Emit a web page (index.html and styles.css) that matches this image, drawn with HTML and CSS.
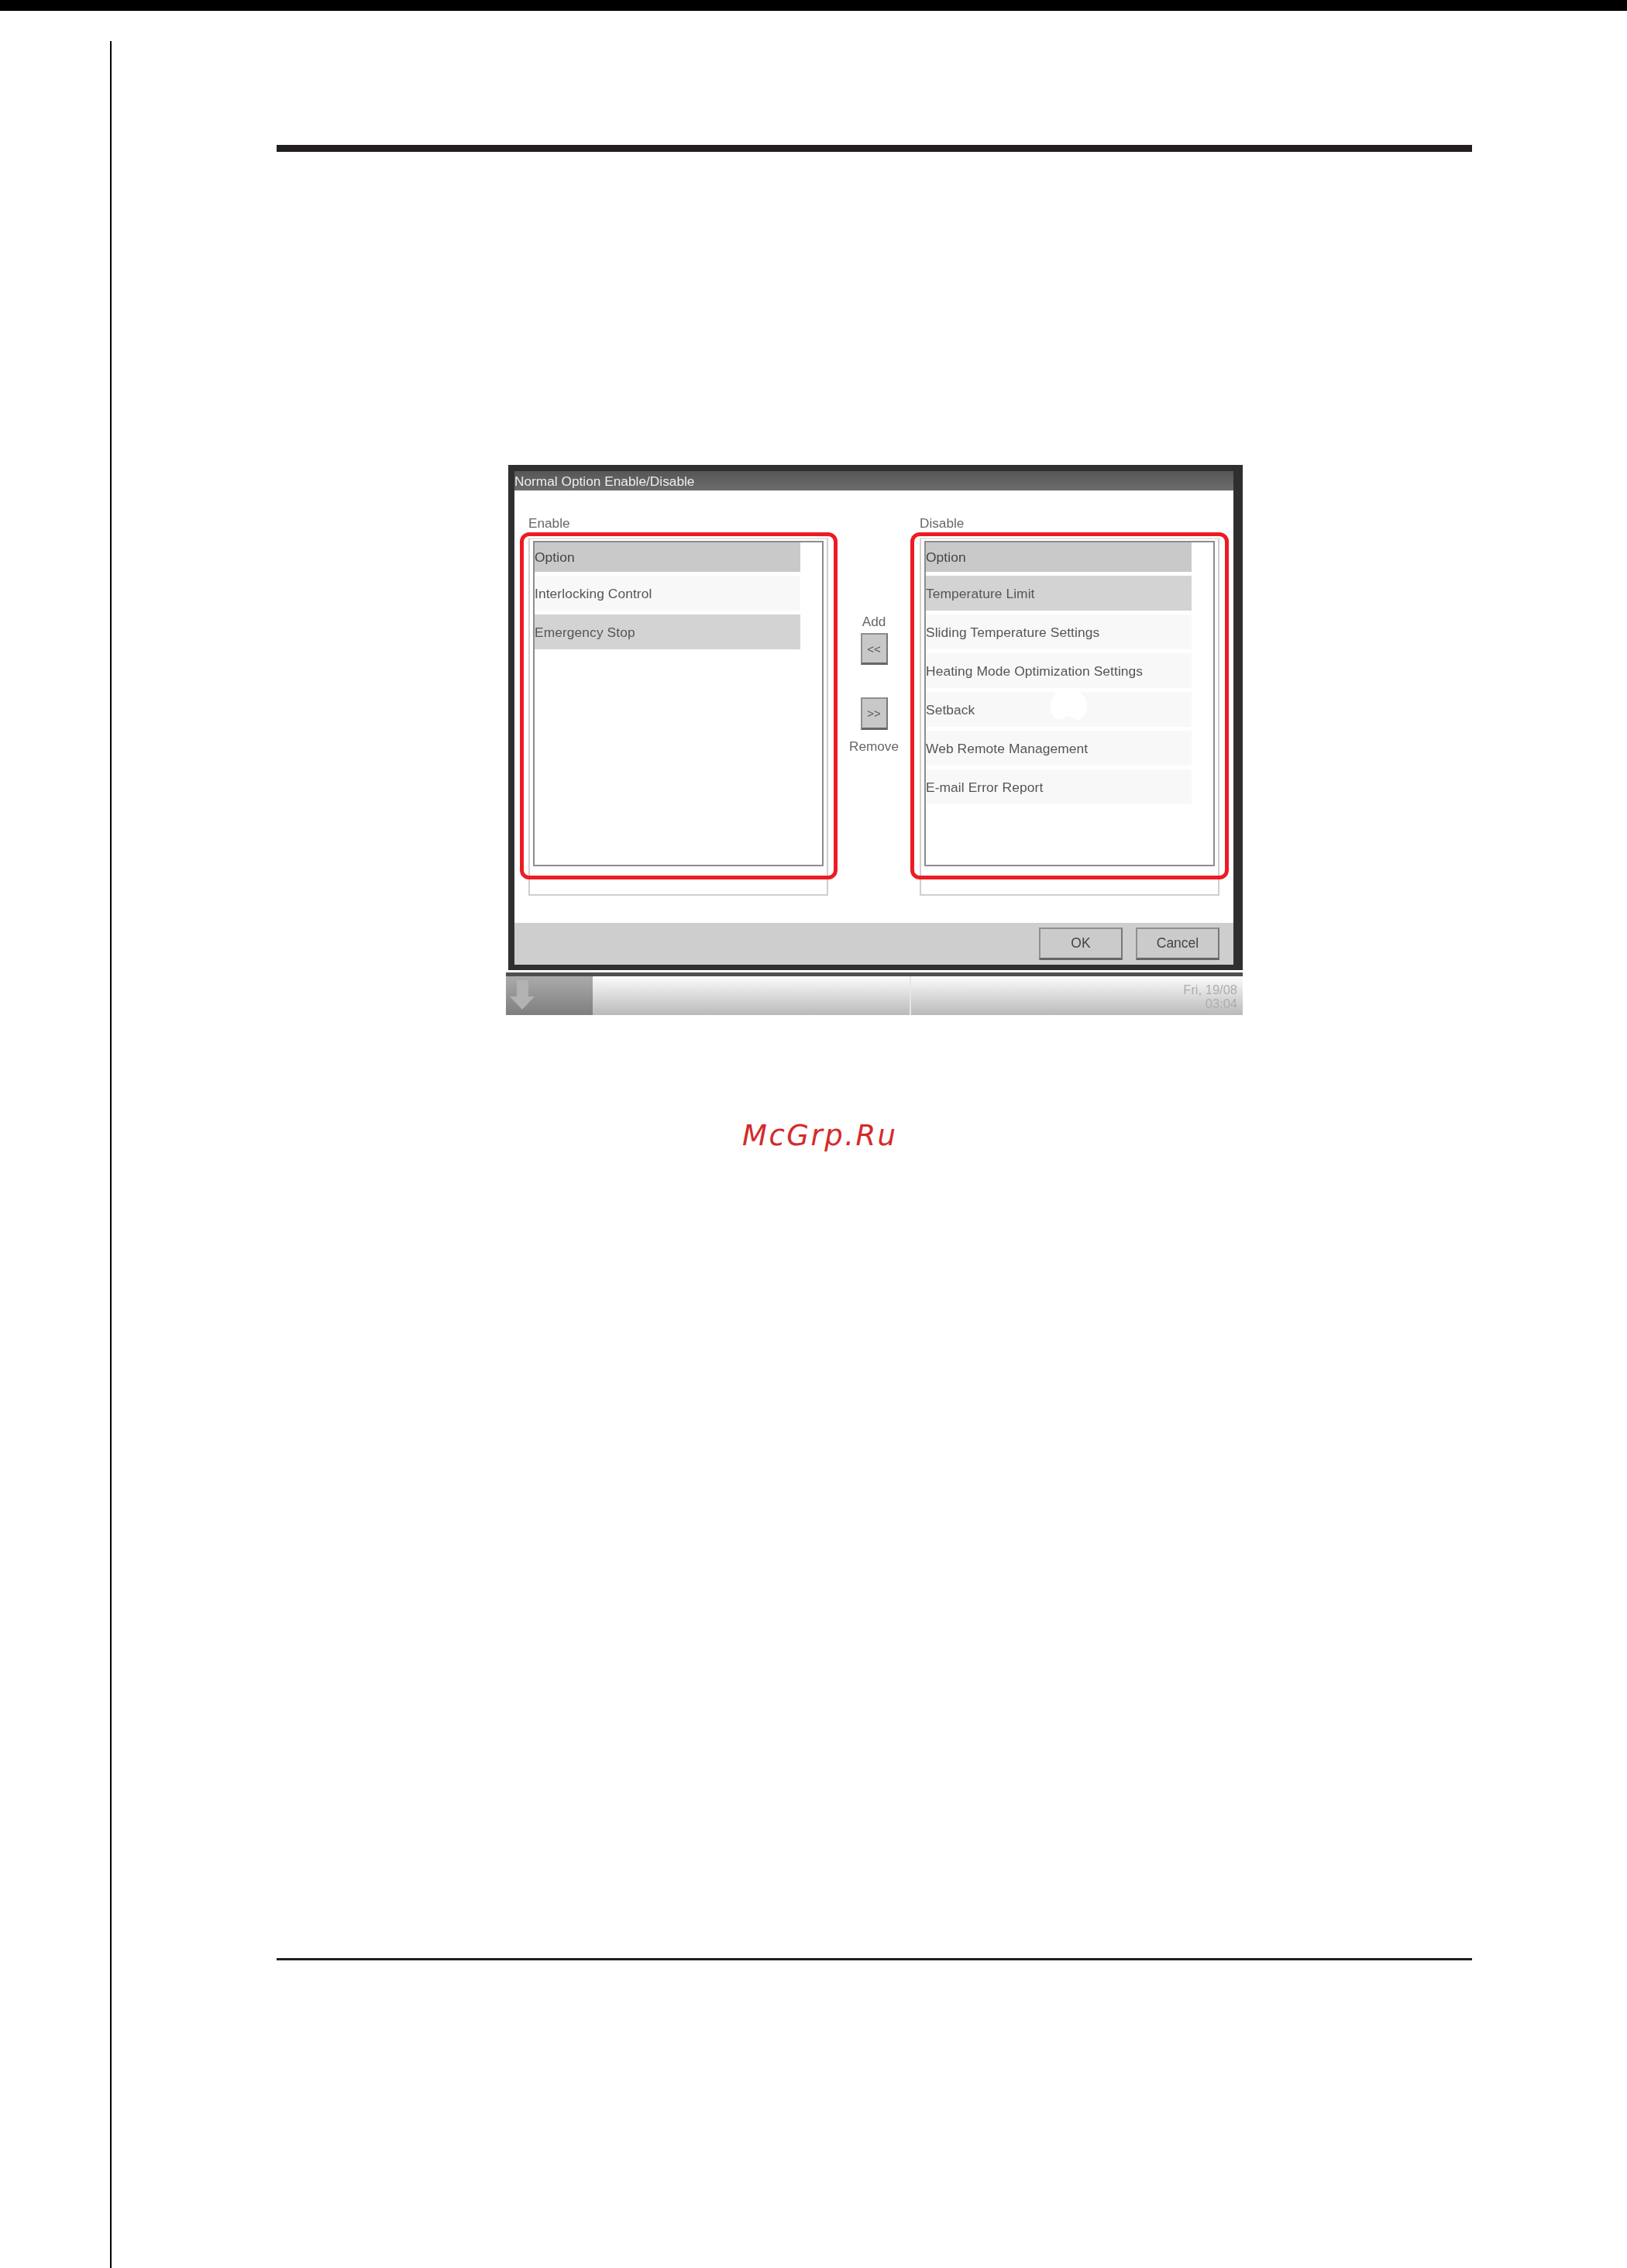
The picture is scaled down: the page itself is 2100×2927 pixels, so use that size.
FILE: index.html
```html
<!DOCTYPE html>
<html lang="en">
<head>
<meta charset="utf-8">
<title>Normal Option Enable/Disable</title>
<link rel="stylesheet" href="styles.css">
</head>
<body>
<div class="topbar"></div>
<main class="sheet">
  <div class="rule-heavy"></div>
  <section class="figure">
    <div class="dialog">
      <div class="titlebar">Normal Option Enable/Disable</div>
      <div class="content">
        <div class="col">
          <div class="col-label">Enable</div>
          <div class="outer">
            <div class="inner">
              <div class="rows">
                <div class="row row-head">Option</div>
                <div class="row">Interlocking Control</div>
                <div class="row row-sel">Emergency Stop</div>
              </div>
            </div>
            <div class="redbox"></div>
          </div>
        </div>
        <div class="center">
          <div class="center-label">Add</div>
          <div class="arrowbtn arrowbtn-add">&lt;&lt;</div>
          <div class="arrowbtn arrowbtn-remove">&gt;&gt;</div>
          <div class="center-label center-label-remove">Remove</div>
        </div>
        <div class="col">
          <div class="col-label">Disable</div>
          <div class="outer">
            <div class="inner">
              <div class="rows">
                <div class="row row-head">Option</div>
                <div class="row row-sel">Temperature Limit</div>
                <div class="row">Sliding Temperature Settings</div>
                <div class="row">Heating Mode Optimization Settings</div>
                <div class="row">Setback</div>
                <div class="row">Web Remote Management</div>
                <div class="row">E-mail Error Report</div>
                <svg class="blob" viewBox="0 0 47 41" width="47" height="41"><path d="M23.5 0C37 0 47 11 47 23C47 33 42 41 35 41C29 41 28 36 23.5 36C19 36 18 41 12 41C5 41 0 33 0 23C0 11 10 0 23.5 0Z"/></svg>
              </div>
            </div>
            <div class="redbox redbox-right"></div>
          </div>
        </div>
      </div>
      <div class="footer">
        <div class="btn">OK</div>
        <div class="btn">Cancel</div>
      </div>
    </div>
    <div class="strip"></div>
    <div class="taskbar">
      <div class="downbtn">
        <svg viewBox="0 0 32 38" width="32" height="38"><path d="M9 0H24V21H32L16 38L0 21H9Z"/></svg>
      </div>
      <div class="seg"></div>
      <div class="seg seg-date"><span>Fri, 19/08</span><span>03:04</span></div>
    </div>
  </section>
  <div class="watermark">McGrp.Ru</div>
  <div class="rule-thin"></div>
</main>
</body>
</html>
```

FILE: styles.css
```css
* { box-sizing: border-box; }
html, body { margin: 0; padding: 0; background: #fff; }
body { width: 2100px; height: 2927px; overflow: hidden; font-family: "Liberation Sans", Arial, sans-serif; }

.topbar { height: 14px; background: #000; }
.sheet { margin: 39px 0 0 142px; width: 1758px; height: 2874px; border-left: 2px solid #000; padding: 134px 0 0 213px; }
.rule-heavy { height: 9px; background: #231f20; }
.rule-thin { margin-top: 1039px; height: 3px; background: #231f20; }

.figure { margin: 404px 0 0 296px; width: 951px; filter: blur(0.7px); }
.dialog { margin-left: 3px; width: 948px; height: 652px; background: #fff; border: solid #2f2f2f; border-width: 8px 12px 7px 8px; display: flex; flex-direction: column; }
.titlebar { height: 25px; background: linear-gradient(#565656, #6c6c6c); color: #eee; font-size: 17.3px; line-height: 27px; white-space: nowrap; }

.content { height: 558px; padding-left: 18px; display: grid; grid-template-columns: 387px 118px 387px; }
.col-label { height: 61px; padding: 32px 0 0; font-size: 17.2px; line-height: 20px; color: #666; }
.outer { position: relative; height: 462px; padding: 2px 4px 0; border: 2px solid #cfcfcf; border-top-color: #e4e4e4; }
.inner { height: 420px; border: 2px solid #8c8c8c; }
.rows { position: relative; width: 343px; display: flex; flex-direction: column; gap: 5px; }
.row { height: 45px; background: #f8f8f8; color: #555; font-size: 17.4px; letter-spacing: 0.08px; line-height: 46px; white-space: nowrap; }
.row-head { height: 38px; line-height: 38px; background: #c9c9c9; color: #444; }
.row-sel { background: #d3d3d3; }

.redbox { position: absolute; left: -13px; top: -9px; width: 410px; height: 448px; border: 5px solid #ed1c24; border-radius: 12px; }
.redbox-right { left: -14px; width: 411px; }
.blob { position: absolute; left: 161px; top: 188px; fill: #fff; }

.center { padding-top: 159px; display: flex; flex-direction: column; align-items: center; }
.center-label { height: 20px; font-size: 17.2px; line-height: 20px; color: #666; }
.center-label-remove { margin-top: 11px; }
.arrowbtn { width: 35px; display: flex; align-items: center; justify-content: center; background: #c8c8c8; border: 2px solid; border-color: #8f8f8f #777 #666 #8f8f8f; border-bottom-width: 3px; color: #555; font-size: 15px; }
.arrowbtn-add { height: 41px; margin-top: 5px; }
.arrowbtn-remove { height: 42px; margin-top: 42px; }

.footer { height: 54px; padding: 6px 18px 0 0; background: #cecece; display: flex; justify-content: flex-end; gap: 17px; }
.btn { width: 108px; height: 42px; display: flex; align-items: center; justify-content: center; background: #cbcbcb; border: 2px solid; border-color: #8f8f8f #777 #666 #8f8f8f; border-bottom-width: 3px; color: #444; font-size: 17.5px; }

.strip { margin-top: 3px; height: 5px; background: #4f4f4f; }
.taskbar { height: 50px; display: flex; }
.downbtn { width: 112px; padding: 5px 0 0 5px; background: linear-gradient(#ababab, #7e7e7e); }
.downbtn svg { display: block; fill: #b2b2b2; }
.seg { width: 411px; border-right: 2px solid #e6e6e6; background: linear-gradient(#fbfbfb, #bababa); }
.seg-date { width: auto; flex: 1; border-right: 0; padding: 8px 7px 0 0; display: flex; flex-direction: column; align-items: flex-end; color: #adadad; font-size: 16.5px; line-height: 18px; }

.watermark { margin: 134px 0 0 601px; font-family: "DejaVu Sans", sans-serif; font-style: italic; font-size: 37px; line-height: 44px; letter-spacing: 2.5px; color: #d42a2a; }
```
